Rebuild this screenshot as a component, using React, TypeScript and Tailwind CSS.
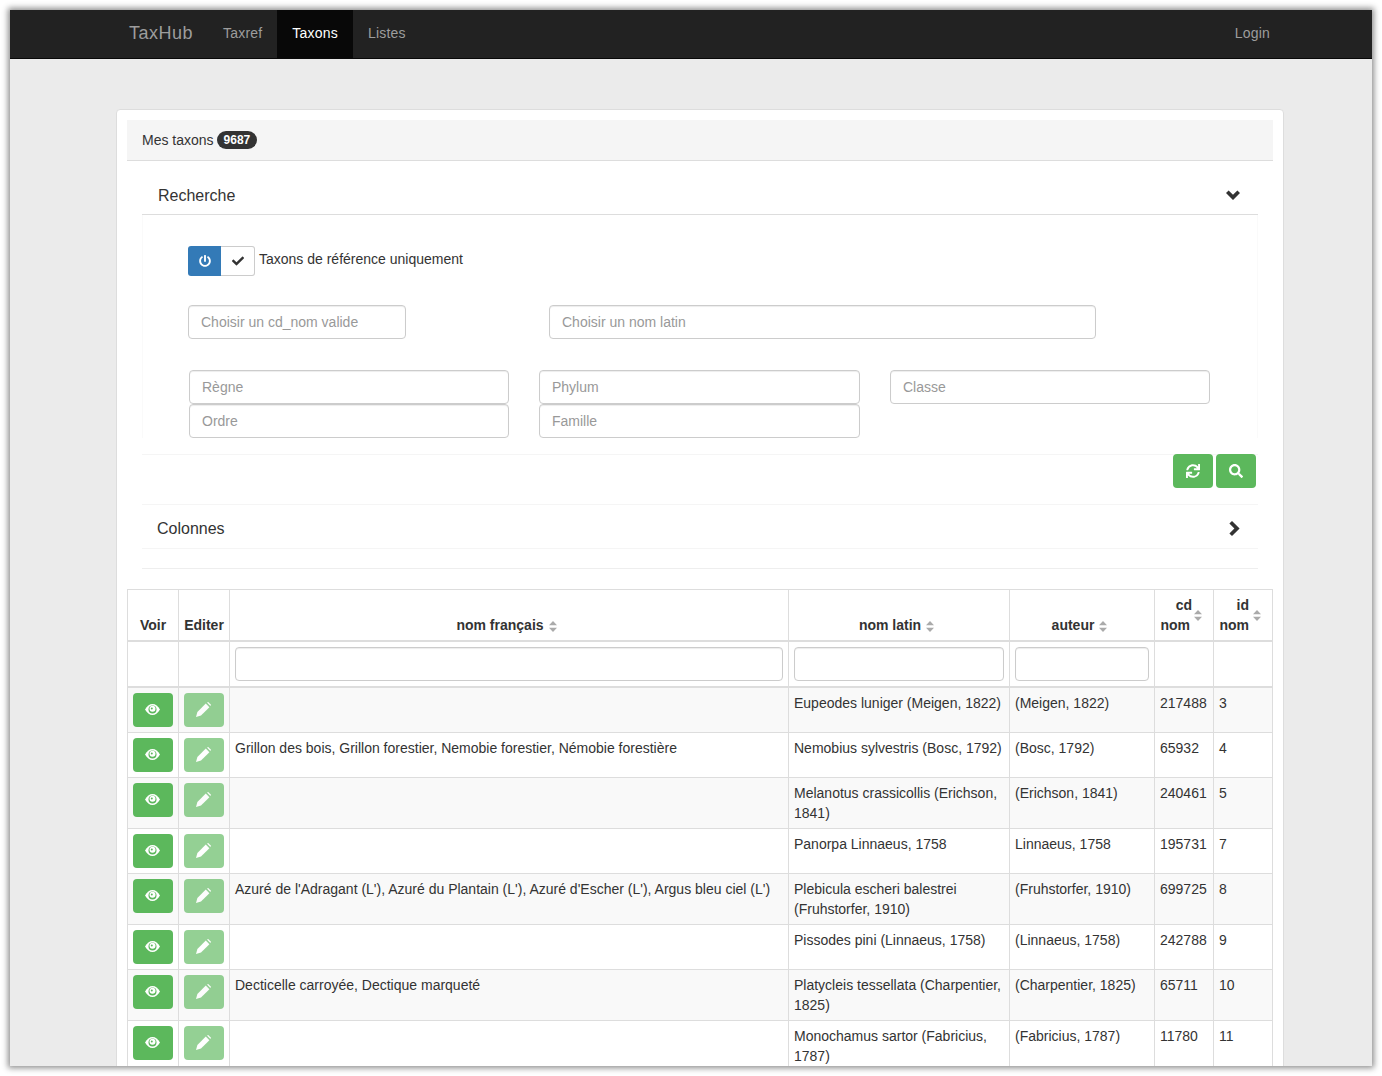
import { FaCheck, FaPowerOff, FaSearch, FaSync } from "react-icons/fa";

const rows = [
  { fr: "", latin: "Eupeodes luniger (Meigen, 1822)", auteur: "(Meigen, 1822)", cd: "217488", id: "3" },
  { fr: "Grillon des bois, Grillon forestier, Nemobie forestier, Némobie forestière", latin: "Nemobius sylvestris (Bosc, 1792)", auteur: "(Bosc, 1792)", cd: "65932", id: "4" },
  { fr: "", latin: "Melanotus crassicollis (Erichson, 1841)", auteur: "(Erichson, 1841)", cd: "240461", id: "5" },
  { fr: "", latin: "Panorpa Linnaeus, 1758", auteur: "Linnaeus, 1758", cd: "195731", id: "7" },
  { fr: "Azuré de l'Adragant (L'), Azuré du Plantain (L'), Azuré d'Escher (L'), Argus bleu ciel (L')", latin: "Plebicula escheri balestrei (Fruhstorfer, 1910)", auteur: "(Fruhstorfer, 1910)", cd: "699725", id: "8" },
  { fr: "", latin: "Pissodes pini (Linnaeus, 1758)", auteur: "(Linnaeus, 1758)", cd: "242788", id: "9" },
  { fr: "Decticelle carroyée, Dectique marqueté", latin: "Platycleis tessellata (Charpentier, 1825)", auteur: "(Charpentier, 1825)", cd: "65711", id: "10" },
  { fr: "", latin: "Monochamus sartor (Fabricius, 1787)", auteur: "(Fabricius, 1787)", cd: "11780", id: "11" },
];

const inputCls = "block h-[34px] rounded border border-[#ccc] bg-white px-3 text-[14px] text-[#555] placeholder:text-[#999] shadow-[inset_0_1px_1px_rgba(0,0,0,0.075)]";
const cellCls = "border border-[#ddd] p-[5px] align-top";
const headCls = "border border-[#ddd] border-b-2 p-[5px] align-bottom text-center";
const navCls = "px-[15px] leading-[47px] tracking-[0.2px]";

function Sort() {
  return (
    <svg viewBox="0 0 8 11" className="inline-block w-[8px] h-[11px] ml-[5px] mr-[5px] align-[-2px] shrink-0 fill-[#aaa]">
      <polygon points="4,0 8,4.2 0,4.2" />
      <polygon points="4,11 8,6.8 0,6.8" />
    </svg>
  );
}

function Eye() {
  return (
    <svg viewBox="0 0 15 11" className="w-[15px] h-[11px] -mt-[2px] -ml-px">
      <path d="M0 5.5C2 2 4.5 0 7.5 0S13 2 15 5.5C13 9 10.5 11 7.5 11S2 9 0 5.5Z" fill="#fff" />
      <circle cx="7.5" cy="5.5" r="4" fill="#5cb85c" />
      <circle cx="7.5" cy="4.8" r="3" fill="#fff" />
      <circle cx="6.8" cy="4.6" r="1" fill="#5cb85c" />
    </svg>
  );
}

function Pencil() {
  return (
    <svg viewBox="0 0 15 15" className="w-[15px] h-[15px] -mt-[2px] -ml-px fill-white">
      <polygon points="0,15 1.4,10 9.8,1.6 13.4,5.2 5,13.6" />
      <polygon points="11,0.6 12.2,0 15,2.8 14.4,4" />
    </svg>
  );
}

export default function App() {
  return (
    <div className="bg-white p-[10px] h-[1076px] overflow-hidden font-['Liberation_Sans',Arial,sans-serif] text-[14px] leading-[20px] text-[#333]">
      <div className="h-[1056px] w-[1362px] overflow-hidden bg-[#ebebeb] shadow-[0_0_6px_2px_rgba(0,0,0,0.45)]">
        {/* navbar */}
        <div className="h-[49px] bg-[#222] border-b border-[#080808] flex pl-[104px] pr-[87px]">
          <div className="text-[18px] text-[#9d9d9d] px-[15px] leading-[46px] tracking-[0.5px]">TaxHub</div>
          <div className={`${navCls} text-[#9d9d9d]`}>Taxref</div>
          <div className={`${navCls} text-white bg-[#080808]`}>Taxons</div>
          <div className={`${navCls} text-[#9d9d9d]`}>Listes</div>
          <div className={`${navCls} ml-auto text-[#9d9d9d]`}>Login</div>
        </div>

        {/* main card */}
        <div className="mt-[50px] ml-[106px] w-[1168px] bg-white border border-[#ddd] rounded pt-[10px] pl-[10px] pr-[10px] h-[1000px]">
          <div className="h-[41px] bg-[#f5f5f5] border-b border-[#ddd] pl-[15px] flex items-center gap-[3px]">
            <span>Mes taxons</span>
            <span className="bg-[#333] text-white font-bold text-[12px] leading-[12px] rounded-[10px] px-[7px] py-[3px]">9687</span>
          </div>

          <div className="mx-[15px]">
            {/* recherche */}
            <div className="h-[54px] border-b border-[#ddd] flex items-center justify-between pl-[16px] pr-[18px] pt-[16px]">
              <span className="text-[16px]">Recherche</span>
              <svg viewBox="0 0 14 11" className="w-[14px] h-[11px] fill-[#333] mb-px">
                <polygon points="0,3 2.6,0.4 7,4.8 11.4,0.4 14,3 7,10" />
              </svg>
            </div>

            <div className="border-x border-[#fafafa]">
              <div className="pt-[31px] pl-[45px] flex items-start">
                <div className="flex h-[30px] w-[67px]">
                  <div className="w-[33px] rounded-l-[3px] bg-[#337ab7] text-white flex items-center justify-center"><FaPowerOff className="text-[12px]" /></div>
                  <div className="flex-1 rounded-r-[3px] border border-l-0 border-[#ccc] flex items-center justify-center"><FaCheck className="text-[12px] text-[#333]" /></div>
                </div>
                <span className="ml-1 mt-[3px]">Taxons de référence uniquement</span>
              </div>

              <div className="mt-[29px] pl-[45px] flex">
                <input className={`${inputCls} w-[218px]`} placeholder="Choisir un cd_nom valide" />
                <input className={`${inputCls} w-[547px] ml-[143px]`} placeholder="Choisir un nom latin" />
              </div>

              <div className="mt-[31px] pl-[46px] grid grid-cols-[320px_321px_320px] gap-x-[30px]">
                <input className={`${inputCls} w-full`} placeholder="Règne" />
                <input className={`${inputCls} w-full`} placeholder="Phylum" />
                <input className={`${inputCls} w-full`} placeholder="Classe" />
                <input className={`${inputCls} w-full`} placeholder="Ordre" />
                <input className={`${inputCls} w-full`} placeholder="Famille" />
              </div>
            </div>

            <div className="mt-[16px] border-t border-[#f5f5f5] h-[50px] flex justify-end gap-[3px] pr-[2px]">
              <button className="-mt-px w-[40px] h-[34px] bg-[#5cb85c] rounded text-white flex items-center justify-center"><FaSync className="text-[14px]" /></button>
              <button className="-mt-px w-[40px] h-[34px] bg-[#5cb85c] rounded text-white flex items-center justify-center"><FaSearch className="text-[14px]" /></button>
            </div>

            <div className="h-[45px] border-y border-[#f5f5f5] flex items-center justify-between pl-[15px] pr-[18px] pt-[5px]">
              <span className="text-[16px]">Colonnes</span>
              <svg viewBox="0 0 11 15" className="w-[11px] h-[15px] -mt-px fill-[#333]">
                <polygon points="3,0 10.6,7.5 3,15 0.4,12.4 5.4,7.5 0.4,2.6" />
              </svg>
            </div>
            <div className="h-[20px] border-b border-[#eee]" />
          </div>

          {/* table */}
          <table className="mt-[20px] w-[1145px] table-fixed border-collapse">
            <colgroup>
              <col className="w-[51px]" />
              <col className="w-[51px]" />
              <col className="w-[559px]" />
              <col className="w-[221px]" />
              <col className="w-[145px]" />
              <col className="w-[59px]" />
              <col className="w-[59px]" />
            </colgroup>
            <thead>
              <tr className="font-bold">
                <th className={headCls}>Voir</th>
                <th className={headCls}>Editer</th>
                <th className={headCls}>nom français<Sort /></th>
                <th className={headCls}>nom latin<Sort /></th>
                <th className={headCls}>auteur<Sort /></th>
                <th className={headCls}>
                  <div className="flex items-center">
                    <span className="w-[30px] -mr-px text-right"><span className="block -mr-[2px]">cd</span>nom</span><Sort />
                  </div>
                </th>
                <th className={headCls}>
                  <div className="flex items-center">
                    <span className="w-[30px] -mr-px text-right">id<br />nom</span><Sort />
                  </div>
                </th>
              </tr>
              <tr>
                <th className={`${cellCls} border-b-2`} />
                <th className={`${cellCls} border-b-2`} />
                <th className={`${cellCls} border-b-2`}><input className={`${inputCls} w-full`} /></th>
                <th className={`${cellCls} border-b-2`}><input className={`${inputCls} w-full`} /></th>
                <th className={`${cellCls} border-b-2`}><input className={`${inputCls} w-full`} /></th>
                <th className={`${cellCls} border-b-2`} />
                <th className={`${cellCls} border-b-2`} />
              </tr>
            </thead>
            <tbody>
              {rows.map((r, i) => (
                <tr key={r.id} className={i % 2 === 0 ? "bg-[#f9f9f9]" : "bg-white"}>
                  <td className={cellCls}>
                    <button className="w-[40px] h-[34px] bg-[#5cb85c] rounded flex items-center justify-center"><Eye /></button>
                  </td>
                  <td className={cellCls}>
                    <button className="w-[40px] h-[34px] bg-[#5cb85c] opacity-65 rounded flex items-center justify-center"><Pencil /></button>
                  </td>
                  <td className={cellCls}>{r.fr}</td>
                  <td className={cellCls}>{r.latin}</td>
                  <td className={cellCls}>{r.auteur}</td>
                  <td className={cellCls}>{r.cd}</td>
                  <td className={cellCls}>{r.id}</td>
                </tr>
              ))}
            </tbody>
          </table>
        </div>
      </div>
    </div>
  );
}
